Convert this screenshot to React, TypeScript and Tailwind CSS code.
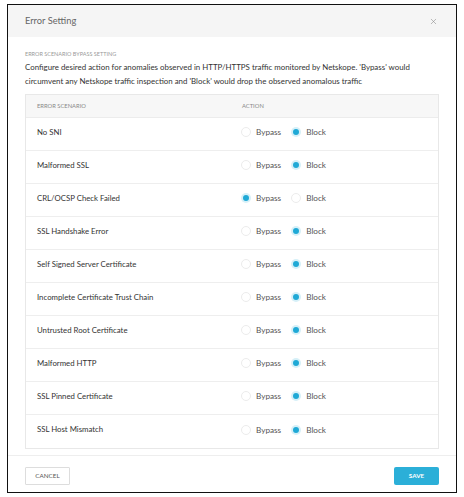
import { X } from 'lucide-react';

const rows: { name: string; value: 'bypass' | 'block' }[] = [
  { name: 'No SNI', value: 'block' },
  { name: 'Malformed SSL', value: 'block' },
  { name: 'CRL/OCSP Check Failed', value: 'bypass' },
  { name: 'SSL Handshake Error', value: 'block' },
  { name: 'Self Signed Server Certificate', value: 'block' },
  { name: 'Incomplete Certificate Trust Chain', value: 'block' },
  { name: 'Untrusted Root Certificate', value: 'block' },
  { name: 'Malformed HTTP', value: 'block' },
  { name: 'SSL Pinned Certificate', value: 'block' },
  { name: 'SSL Host Mismatch', value: 'block' },
];

function Radio({ checked, label }: { checked: boolean; label: string }) {
  return (
    <span className="flex items-center gap-[5px]">
      <span
        className={
          checked
            ? 'w-[10px] h-[10px] rounded-full bg-[#d6f0f8] flex items-center justify-center'
            : 'w-[10px] h-[10px] rounded-full border border-[#ececec] bg-white'
        }
      >
        {checked && <span className="w-[6px] h-[6px] rounded-full bg-[#1fa9d6]" />}
      </span>
      <span className="text-[8.2px] text-[#555]">{label}</span>
    </span>
  );
}

export default function App() {
  return (
    <div className="w-[464px] h-[497px] bg-white pt-[4px] pl-[7px]" style={{ fontFamily: 'Lato, "Open Sans", sans-serif' }}>
      <div className="w-[450px] h-[489px] border-[1.5px] border-[#111] flex flex-col">
        <div className="h-[32px] shrink-0 bg-[#f5f5f5] flex items-center justify-between pl-[17px] pr-[18px]">
          <span className="text-[9.3px] text-[#666]">Error Setting</span>
          <X size={9} strokeWidth={1.5} className="text-[#888]" />
        </div>

        <div className="flex-1 px-[17px] pt-[13px]">
          <div className="text-[5.5px] uppercase text-[#999] leading-[9px]">Error Scenario Bypass Setting</div>
          <p className="text-[7.9px] text-[#333] leading-[14px] mt-[1px]">
            Configure desired action for anomalies observed in HTTP/HTTPS traffic monitored by Netskope. 'Bypass' would circumvent any Netskope traffic inspection and 'Block' would drop the observed anomalous traffic
          </p>

          <div className="mt-[6px] border border-[#e8e8e8]">
            <div className="h-[23px] bg-[#f7f7f7] border-b border-[#ececec] flex items-center text-[5.8px] uppercase text-[#888]">
              <span className="w-[216px] pl-[11px]">Error Scenario</span>
              <span>Action</span>
            </div>
            {rows.map((r, i) => (
              <div
                key={r.name}
                className={
                  'h-[33px] pb-[3px] flex items-center ' + (i < rows.length - 1 ? 'border-b border-[#eeeeee]' : '')
                }
              >
                <span className="w-[215px] pl-[11px] text-[7.8px] text-[#333]">{r.name}</span>
                <div className="flex items-center gap-[10px]">
                  <Radio checked={r.value === 'bypass'} label="Bypass" />
                  <Radio checked={r.value === 'block'} label="Block" />
                </div>
              </div>
            ))}
          </div>
        </div>

        <div className="h-[37px] shrink-0 border-t border-[#eeeeee] flex items-center justify-between px-[17px] pt-[4px]">
          <button className="w-[45px] h-[18px] border border-[#dddddd] bg-white text-[6.3px] text-[#555] uppercase rounded-[1px]">
            Cancel
          </button>
          <button className="w-[45px] h-[18px] bg-[#2bafd8] text-[6.3px] text-white font-bold uppercase rounded-[2px]">
            Save
          </button>
        </div>
      </div>
    </div>
  );
}
